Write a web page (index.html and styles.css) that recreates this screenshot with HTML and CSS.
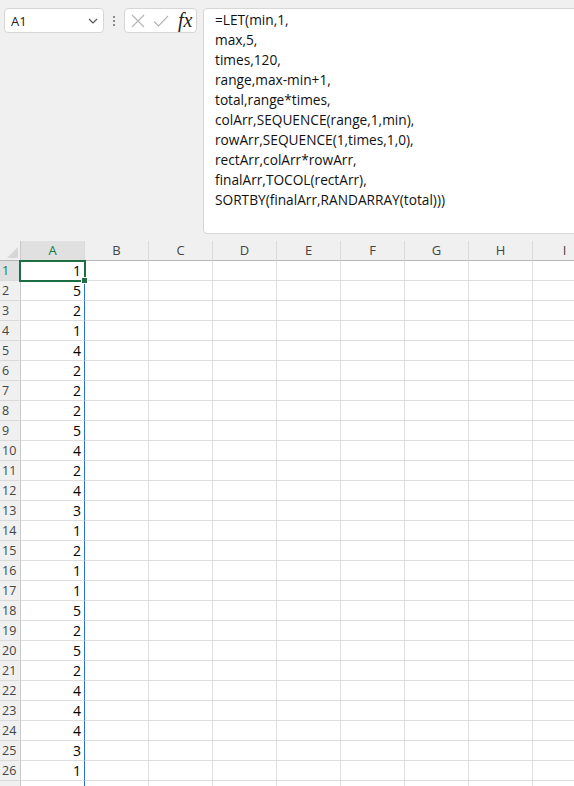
FILE: index.html
```html
<!DOCTYPE html>
<html>
<head>
<meta charset="utf-8">
<link rel="stylesheet" href="styles.css">
</head>
<body>
<div class="topbar">
  <div class="namebox">
    <span class="ref">A1</span>
    <svg class="chev" width="10" height="6" viewBox="0 0 10 6"><path d="M1 1 L5 5 L9 1" fill="none" stroke="#555" stroke-width="1.2"/></svg>
  </div>
  <div class="dots"><i></i><i></i><i></i></div>
  <div class="fxbox">
    <svg width="14" height="14" viewBox="0 0 14 14"><path d="M1 1 L13 13 M13 1 L1 13" stroke="#b4b4b4" stroke-width="1.1" fill="none"/></svg>
    <svg width="16" height="14" viewBox="0 0 16 14"><path d="M1 7.5 L5.5 12 L15 2" stroke="#b4b4b4" stroke-width="1.1" fill="none"/></svg>
    <span class="fx">fx</span>
  </div>
  <div class="formula">
    <div>=LET(min,1,</div>
    <div>max,5,</div>
    <div>times,120,</div>
    <div>range,max-min+1,</div>
    <div>total,range*times,</div>
    <div>colArr,SEQUENCE(range,1,min),</div>
    <div>rowArr,SEQUENCE(1,times,1,0),</div>
    <div>rectArr,colArr*rowArr,</div>
    <div>finalArr,TOCOL(rectArr),</div>
    <div>SORTBY(finalArr,RANDARRAY(total)))</div>
  </div>
</div>
<div class="sheet">
  <div class="hdr">
    <div class="corner"><span class="tri"></span></div>
    <div class="ch sel">A</div><div class="ch">B</div><div class="ch">C</div><div class="ch">D</div><div class="ch">E</div><div class="ch">F</div><div class="ch">G</div><div class="ch">H</div><div class="ch">I</div>
  </div>
  <div class="row"><div class="rh sel">1</div><div class="c a">1</div><div class="c"></div><div class="c"></div><div class="c"></div><div class="c"></div><div class="c"></div><div class="c"></div><div class="c"></div><div class="c"></div></div>
  <div class="row"><div class="rh">2</div><div class="c a">5</div><div class="c"></div><div class="c"></div><div class="c"></div><div class="c"></div><div class="c"></div><div class="c"></div><div class="c"></div><div class="c"></div></div>
  <div class="row"><div class="rh">3</div><div class="c a">2</div><div class="c"></div><div class="c"></div><div class="c"></div><div class="c"></div><div class="c"></div><div class="c"></div><div class="c"></div><div class="c"></div></div>
  <div class="row"><div class="rh">4</div><div class="c a">1</div><div class="c"></div><div class="c"></div><div class="c"></div><div class="c"></div><div class="c"></div><div class="c"></div><div class="c"></div><div class="c"></div></div>
  <div class="row"><div class="rh">5</div><div class="c a">4</div><div class="c"></div><div class="c"></div><div class="c"></div><div class="c"></div><div class="c"></div><div class="c"></div><div class="c"></div><div class="c"></div></div>
  <div class="row"><div class="rh">6</div><div class="c a">2</div><div class="c"></div><div class="c"></div><div class="c"></div><div class="c"></div><div class="c"></div><div class="c"></div><div class="c"></div><div class="c"></div></div>
  <div class="row"><div class="rh">7</div><div class="c a">2</div><div class="c"></div><div class="c"></div><div class="c"></div><div class="c"></div><div class="c"></div><div class="c"></div><div class="c"></div><div class="c"></div></div>
  <div class="row"><div class="rh">8</div><div class="c a">2</div><div class="c"></div><div class="c"></div><div class="c"></div><div class="c"></div><div class="c"></div><div class="c"></div><div class="c"></div><div class="c"></div></div>
  <div class="row"><div class="rh">9</div><div class="c a">5</div><div class="c"></div><div class="c"></div><div class="c"></div><div class="c"></div><div class="c"></div><div class="c"></div><div class="c"></div><div class="c"></div></div>
  <div class="row"><div class="rh">10</div><div class="c a">4</div><div class="c"></div><div class="c"></div><div class="c"></div><div class="c"></div><div class="c"></div><div class="c"></div><div class="c"></div><div class="c"></div></div>
  <div class="row"><div class="rh">11</div><div class="c a">2</div><div class="c"></div><div class="c"></div><div class="c"></div><div class="c"></div><div class="c"></div><div class="c"></div><div class="c"></div><div class="c"></div></div>
  <div class="row"><div class="rh">12</div><div class="c a">4</div><div class="c"></div><div class="c"></div><div class="c"></div><div class="c"></div><div class="c"></div><div class="c"></div><div class="c"></div><div class="c"></div></div>
  <div class="row"><div class="rh">13</div><div class="c a">3</div><div class="c"></div><div class="c"></div><div class="c"></div><div class="c"></div><div class="c"></div><div class="c"></div><div class="c"></div><div class="c"></div></div>
  <div class="row"><div class="rh">14</div><div class="c a">1</div><div class="c"></div><div class="c"></div><div class="c"></div><div class="c"></div><div class="c"></div><div class="c"></div><div class="c"></div><div class="c"></div></div>
  <div class="row"><div class="rh">15</div><div class="c a">2</div><div class="c"></div><div class="c"></div><div class="c"></div><div class="c"></div><div class="c"></div><div class="c"></div><div class="c"></div><div class="c"></div></div>
  <div class="row"><div class="rh">16</div><div class="c a">1</div><div class="c"></div><div class="c"></div><div class="c"></div><div class="c"></div><div class="c"></div><div class="c"></div><div class="c"></div><div class="c"></div></div>
  <div class="row"><div class="rh">17</div><div class="c a">1</div><div class="c"></div><div class="c"></div><div class="c"></div><div class="c"></div><div class="c"></div><div class="c"></div><div class="c"></div><div class="c"></div></div>
  <div class="row"><div class="rh">18</div><div class="c a">5</div><div class="c"></div><div class="c"></div><div class="c"></div><div class="c"></div><div class="c"></div><div class="c"></div><div class="c"></div><div class="c"></div></div>
  <div class="row"><div class="rh">19</div><div class="c a">2</div><div class="c"></div><div class="c"></div><div class="c"></div><div class="c"></div><div class="c"></div><div class="c"></div><div class="c"></div><div class="c"></div></div>
  <div class="row"><div class="rh">20</div><div class="c a">5</div><div class="c"></div><div class="c"></div><div class="c"></div><div class="c"></div><div class="c"></div><div class="c"></div><div class="c"></div><div class="c"></div></div>
  <div class="row"><div class="rh">21</div><div class="c a">2</div><div class="c"></div><div class="c"></div><div class="c"></div><div class="c"></div><div class="c"></div><div class="c"></div><div class="c"></div><div class="c"></div></div>
  <div class="row"><div class="rh">22</div><div class="c a">4</div><div class="c"></div><div class="c"></div><div class="c"></div><div class="c"></div><div class="c"></div><div class="c"></div><div class="c"></div><div class="c"></div></div>
  <div class="row"><div class="rh">23</div><div class="c a">4</div><div class="c"></div><div class="c"></div><div class="c"></div><div class="c"></div><div class="c"></div><div class="c"></div><div class="c"></div><div class="c"></div></div>
  <div class="row"><div class="rh">24</div><div class="c a">4</div><div class="c"></div><div class="c"></div><div class="c"></div><div class="c"></div><div class="c"></div><div class="c"></div><div class="c"></div><div class="c"></div></div>
  <div class="row"><div class="rh">25</div><div class="c a">3</div><div class="c"></div><div class="c"></div><div class="c"></div><div class="c"></div><div class="c"></div><div class="c"></div><div class="c"></div><div class="c"></div></div>
  <div class="row"><div class="rh">26</div><div class="c a">1</div><div class="c"></div><div class="c"></div><div class="c"></div><div class="c"></div><div class="c"></div><div class="c"></div><div class="c"></div><div class="c"></div></div>
  <div class="row"><div class="rh"></div><div class="c a"></div><div class="c"></div><div class="c"></div><div class="c"></div><div class="c"></div><div class="c"></div><div class="c"></div><div class="c"></div><div class="c"></div></div>
  <div class="selbox"><span class="handle"></span></div>
</div>
</body>
</html>
```

FILE: styles.css
```css
html, body {
  margin: 0;
  padding: 0;
  width: 574px;
  height: 786px;
  overflow: hidden;
  background: #f0f0f0;
}
body {
  font-family: "Open Sans", "Liberation Sans", sans-serif;
}
.topbar {
  display: flex;
  align-items: flex-start;
  padding: 8px 0 0 4px;
  height: 225px;
  white-space: nowrap;
}
.namebox {
  box-sizing: border-box;
  width: 100px;
  height: 25px;
  background: #fff;
  border: 1px solid #d6d6d6;
  border-radius: 4px;
  display: flex;
  align-items: center;
  justify-content: space-between;
  padding: 0 5px 0 6px;
  flex: none;
}
.ref {
  font-family: "Open Sans", sans-serif;
  font-size: 13px;
  color: #222;
}
.dots {
  width: 3px;
  margin: 8px 8px 0 9px;
  display: flex;
  flex-direction: column;
  gap: 2px;
  flex: none;
}
.dots i {
  display: block;
  width: 2px;
  height: 2px;
  background: #8a8a8a;
}
.fxbox {
  box-sizing: border-box;
  width: 73px;
  height: 25px;
  background: #fff;
  border: 1px solid #d6d6d6;
  border-radius: 4px;
  display: flex;
  align-items: center;
  padding: 0 0 0 6px;
  gap: 8px;
  flex: none;
}
.fx {
  font-family: "Liberation Serif", serif;
  font-style: italic;
  font-size: 20px;
  color: #222;
  margin-left: 1px;
  line-height: 1;
  margin-top: -2px;
}
.formula {
  box-sizing: border-box;
  margin-left: 6px;
  width: 400px;
  height: 226px;
  background: #fff;
  border: 1px solid #d6d6d6;
  border-radius: 4px;
  padding: 1px 0 0 11px;
  font-family: "Open Sans", sans-serif;
  font-size: 13.7px;
  line-height: 20px;
  color: #111;
  flex: none;
}
.sheet {
  position: relative;
  margin-top: 8px;
  width: 700px;
}
.hdr, .row {
  display: flex;
}
.hdr > div, .row > div {
  box-sizing: border-box;
  flex: none;
}
.corner {
  position: relative;
  width: 21px;
  height: 20px;
  border-right: 1px solid #c8c8c8;
  border-bottom: 1px solid #b6b6b6;
  background: #f0f0f0;
}
.tri {
  position: absolute;
  right: 2px;
  bottom: 2px;
  width: 0;
  height: 0;
  border-left: 11px solid transparent;
  border-bottom: 11px solid #d6d6d6;
}
.ch {
  width: 64px;
  height: 20px;
  border-right: 1px solid #dadada;
  border-bottom: 1px solid #b6b6b6;
  background: #f0f0f0;
  text-align: center;
  font-family: "Open Sans", sans-serif;
  font-size: 13px;
  line-height: 19px;
  color: #444;
}
.ch.sel {
  background: #e0e0e0;
  color: #107c41;
  border-bottom: 1px solid #9b9b9b;
}
.rh {
  width: 21px;
  height: 20px;
  border-right: 1px solid #c8c8c8;
  border-bottom: 1px solid #dadada;
  background: #f0f0f0;
  font-family: "Open Sans", sans-serif;
  font-size: 12.5px;
  line-height: 20px;
  color: #444;
  padding-left: 2px;
}
.rh.sel {
  background: #e0e0e0;
  color: #107c41;
}
.c {
  width: 64px;
  height: 20px;
  background: #fff;
  border-right: 1px solid #dedede;
  border-bottom: 1px solid #dedede;
}
.c.a {
  border-right: 1px solid #2a6fd8;
  text-align: right;
  padding-right: 3px;
  font-family: "Open Sans", sans-serif;
  font-size: 14px;
  line-height: 20px;
  color: #000;
}
.selbox {
  position: absolute;
  left: 19px;
  top: 19px;
  width: 67px;
  height: 22px;
  box-sizing: border-box;
  border: 2px solid #1e6e43;
}
.handle {
  position: absolute;
  right: -4px;
  bottom: -4px;
  width: 5px;
  height: 5px;
  background: #1e6e43;
  border: 1px solid #fff;
}
```
